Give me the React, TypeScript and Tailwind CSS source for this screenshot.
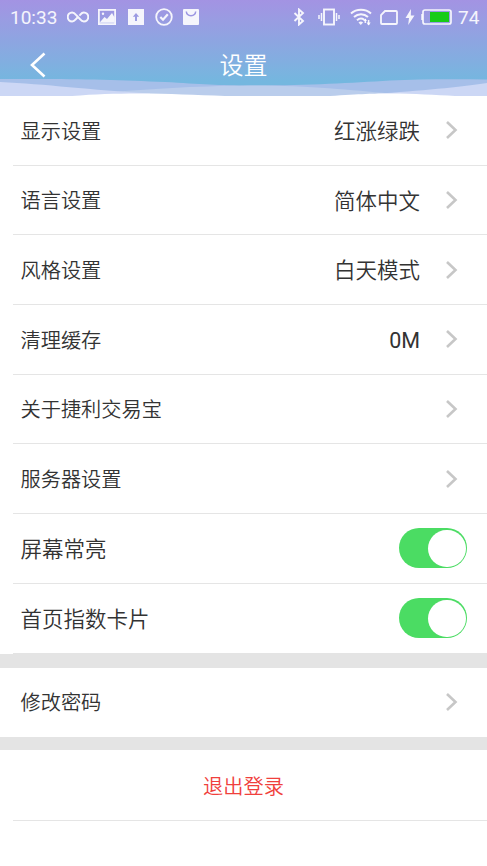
import React from 'react';

interface RowProps {
    label: string;
    value?: string;
    toggle?: boolean;
    large?: boolean;
    last?: boolean;
}

const StatusBar: React.FC = () => (
    <div className="flex h-[34px] items-center text-[19px] font-normal text-white/90">
        <span className="ml-[10px] w-[48px] whitespace-nowrap leading-none">10:33</span>
        <svg className="ml-[9px] h-[12px] w-[22px]" viewBox="0 0 22 12" fill="none" stroke="currentColor" strokeWidth="2">
            <path d="M11 6 8.7 8.4C7.6 9.7 6.7 10.5 5.2 10.5a4.3 4.3 0 0 1 0-9C6.8 1.5 8 2.6 9 3.8l4 4.4c1 1.2 2.2 2.3 3.8 2.3a4.3 4.3 0 0 0 0-9c-1.5 0-2.4.8-3.5 2.1L12.4 4.6" />
        </svg>
        <svg className="ml-[9px] h-[16px] w-[18px]" viewBox="0 0 18 16" fill="none" stroke="currentColor">
            <rect x=".9" y=".9" width="16.2" height="14.2" strokeWidth="1.8" />
            <path d="M1.5 13.8 6.500 8l2.500 2 5-6 2.500 4.500v5.300z" fill="currentColor" stroke="none" />
            <circle cx="5" cy="4.8" r="1.2" fill="currentColor" stroke="none" />
        </svg>
        <svg className="ml-[12px] h-[16px] w-[16px]" viewBox="0 0 16 16">
            <path fill="currentColor" fillRule="evenodd" d="M0 0h16v16H0zM8 4 4.800 7.800H7V12h2V7.800h2.200z" />
        </svg>
        <svg className="ml-[11px] h-[18px] w-[18px]" viewBox="0 0 18 18" fill="none" stroke="currentColor">
            <circle cx="9" cy="9" r="7.800" strokeWidth="1.800" />
            <path d="m5.300 9 2.700 2.700 4.800-5.400" strokeWidth="2.200" />
        </svg>
        <svg className="ml-[10px] h-[16px] w-[16px]" viewBox="0 0 16 16">
            <rect width="16" height="16" rx="1" fill="currentColor" />
            <path d="M3.300 2.500c.5 5.500 8.900 5.500 9.400 0" fill="none" stroke="#9c96e2" strokeWidth="1.500" />
        </svg>

        <svg className="ml-[94px] h-[18px] w-[12px]" viewBox="0 0 12 18" fill="none" stroke="currentColor" strokeWidth="1.900">
            <path d="m1.500 5 8.500 8-4 3.500v-15L10 5l-8.500 8" />
        </svg>
        <svg className="ml-[13px] h-[18px] w-[22px]" viewBox="0 0 22 18" fill="none" stroke="currentColor">
            <rect x="6" y="1.500" width="10" height="15" strokeWidth="1.900" />
            <path d="M3.500 5v8M18.500 5v8M1 7v4M21 7v4" strokeWidth="1.500" />
        </svg>
        <svg className="ml-[10px] h-[18px] w-[22px]" viewBox="0 0 22 18" fill="none" stroke="currentColor" strokeWidth="2">
            <path d="M1 5.500c5.500-5 14.500-5 20 0M4 9c4-3.700 10-3.700 14 0M7 12.300c2.500-2.200 5-2.200 7.200-.6" />
            <path d="m8.500 14.500 2.300 2.500 2.300-2.500c-1.500-1.200-3.200-1.200-4.600 0z" fill="currentColor" stroke="none" />
            <path d="M15.300 11v4M18.600 12v5" strokeWidth="1.500" />
            <path d="m13.300 13 2-2.500 1.700 2.500M16.500 14.500l2.100 3 2.100-3" fill="currentColor" stroke="none" />
        </svg>
        <svg className="ml-[8px] h-[15px] w-[18px]" viewBox="0 0 18 15" fill="none" stroke="currentColor" strokeWidth="1.800">
            <path d="M5 1H16a1 1 0 0 1 1 1v11a1 1 0 0 1-1 1H2a1 1 0 0 1-1-1V5z" />
        </svg>
        <svg className="ml-[7px] h-[16px] w-[10px]" viewBox="0 0 10 16" fill="currentColor">
            <path d="M6 0 .5 9H4l-.8 7L9.500 6.500H5.800z" />
        </svg>
        <svg className="ml-[6px] h-[16px] w-[31px]" viewBox="0 0 31 16">
            <rect x="2" y="1" width="28" height="14" rx="2" fill="none" stroke="currentColor" strokeWidth="1.700" />
            <path d="M1 5v6" stroke="currentColor" strokeWidth="1.500" />
            <rect x="9" y="3" width="19" height="10" fill="#18cc18" />
        </svg>
        <span className="ml-[6px] leading-none">74</span>
    </div>
);

const Header: React.FC = () => (
    <header className="relative h-24 bg-linear-to-b from-[#a393e3] via-[#8ca6e1] via-45% to-[#74b7df] to-85%">
        <svg className="absolute bottom-0 left-0 h-[20px] w-full" viewBox="0 0 487 20" preserveAspectRatio="none">
            <path d="M0 3C70 2.500 115 3.500 165 6 200 8 220 9.500 250 9.500 310 9.500 350 7 390 4.500 420 3 455 3 487 3.500V20H0z" fill="#a6bfe9" />
            <path d="M110 16C150 13.500 190 10 250 9.500 310 9.500 350 14 390 17.500L390 20H110z" fill="#bacdec" />
            <path d="M0 6C45 8 90 14 150 17.500L150 20H0zM487 7C460 11 420 15 375 17.800V20H487z" fill="#ccd7f5" />
            <path d="M72 20C95 18.200 115 17.500 138 17.500 170 17.500 195 19 225 20zM330 20C360 18 375 17.500 390 17.500 415 17.500 435 19 455 20z" fill="#fff" />
        </svg>
        <StatusBar />
        <div className="grid h-[62px] grid-cols-3 items-center text-white">
            <svg className="ml-[29px] h-[28px] w-[18px]" viewBox="0 0 18 28" fill="none" stroke="currentColor" strokeWidth="2.600">
                <path d="M15.500 2.500 3 14l12.500 11.500" />
            </svg>
            <h1 className="pt-[2px] text-center text-[24px] leading-none font-light">设置</h1>
        </div>
    </header>
);

const Chevron: React.FC = () => (
    <svg className="ml-[25px] h-[20px] w-[13px]" viewBox="0 0 13 20" fill="none" stroke="#c7c7c7" strokeWidth="2.600">
        <path d="m2 2 8.500 8L2 18" />
    </svg>
);

const Toggle: React.FC = () => (
    <div className="flex h-[40px] w-[68px] justify-end rounded-full bg-[#4bdc63] p-[1.500px]">
        <div className="h-[37px] w-[38px] rounded-full bg-white" />
    </div>
);

const Row: React.FC<RowProps> = ({ label, value, toggle, large, last }) => (
    <div className={`ml-[13px] flex h-[69.700px] items-center border-b pl-[7.500px] text-[#333] ${toggle ? 'pr-5' : 'pr-[29px]'} ${last ? 'border-transparent' : 'border-[#e5e5e5]'}`}>
        <span className={`flex-1 pt-[3px] leading-none ${large ? 'text-[21.500px]' : 'text-[20.200px]'}`}>{label}</span>
        {value && <span className="pt-[3px] text-[21.500px] leading-none">{value}</span>}
        {toggle ? <Toggle /> : <Chevron />}
    </div>
);

const rows: RowProps[] = [
    { label: '显示设置', value: '红涨绿跌' },
    { label: '语言设置', value: '简体中文' },
    { label: '风格设置', value: '白天模式' },
    { label: '清理缓存', value: '0M' },
    { label: '关于捷利交易宝' },
    { label: '服务器设置' },
    { label: '屏幕常亮', toggle: true, large: true },
    { label: '首页指数卡片', toggle: true, large: true, last: true },
];

const App: React.FC = () => (
    <div className="h-[866px] w-[487px] overflow-hidden bg-white font-['Roboto','Noto_Sans_CJK_SC_DemiLight','Noto_Sans_CJK_SC',sans-serif]">
        <Header />
        <main>
            {rows.map(row => (
                <Row key={row.label} {...row} />
            ))}
            <div className="-mt-px ml-[13px] h-px bg-[#e4e4e4]" />
            <div className="h-[14px] bg-[#e4e4e4]" />
            <Row label="修改密码" last />
            <div className="h-[13px] bg-[#e4e4e4]" />
            <button className="ml-[13px] block h-[71px] w-[474px] border-b border-[#e5e5e5] pt-[3px] pr-[13px] text-[20.200px] leading-none text-[#f0403c]">
                退出登录
            </button>
        </main>
    </div>
);

export default App;
